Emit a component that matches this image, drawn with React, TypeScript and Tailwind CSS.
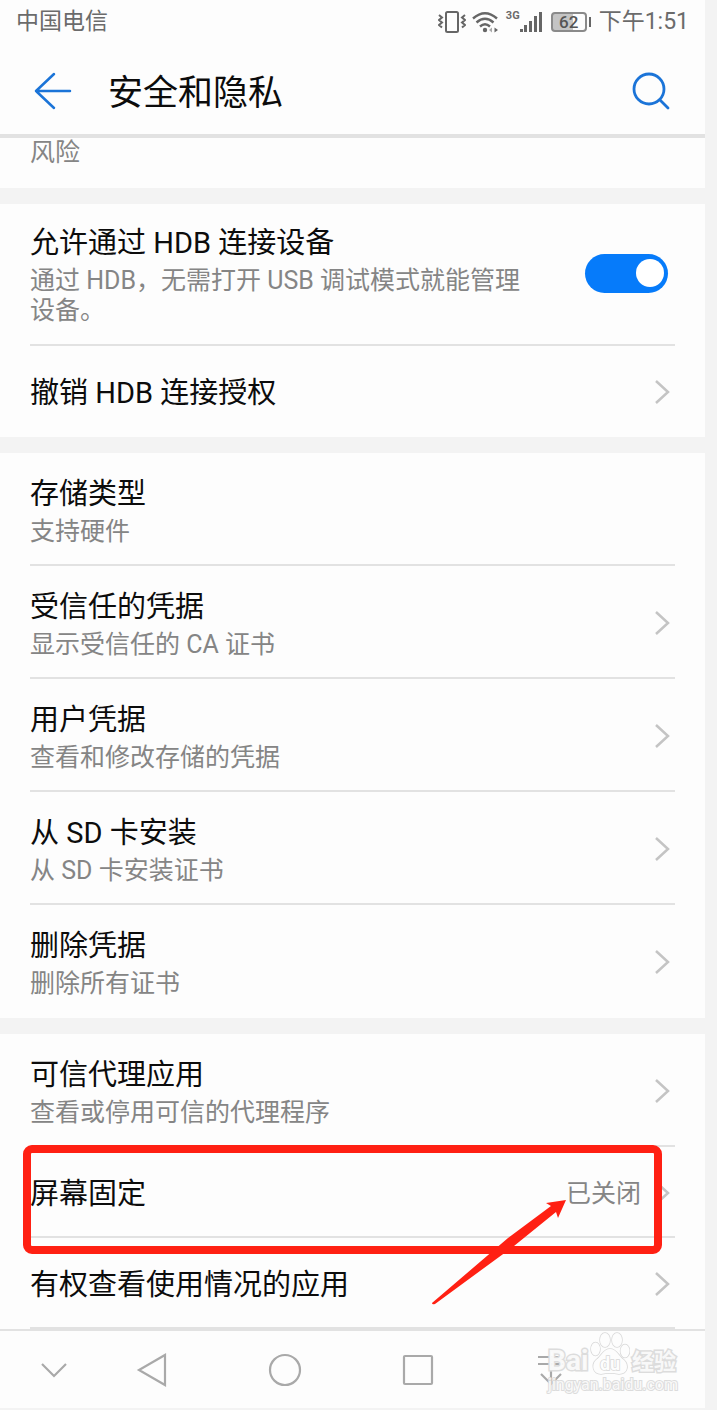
import { useState } from "react";
import type { ReactNode } from "react";

type Item = {
  title: string;
  summary?: string;
  value?: string;
  plain?: boolean;
  highlight?: boolean;
};

const credentialItems: Item[] = [
  { title: "存储类型", summary: "支持硬件", plain: true },
  { title: "受信任的凭据", summary: "显示受信任的 CA 证书" },
  { title: "用户凭据", summary: "查看和修改存储的凭据" },
  { title: "从 SD 卡安装", summary: "从 SD 卡安装证书" },
  { title: "删除凭据", summary: "删除所有证书" },
];

const advancedItems: Item[] = [
  { title: "可信代理应用", summary: "查看或停用可信的代理程序" },
  { title: "屏幕固定", value: "已关闭", highlight: true },
  { title: "有权查看使用情况的应用" },
];

function StatusBar() {
  return (
    <div className="flex h-[42px] items-center pl-4 pr-4 pt-[2px] text-[23px] leading-[30px] text-[#6b6b6b]">
      <span className="flex-1">中国电信</span>

      {/* vibrate */}
      <svg className="mr-[6px]" width="28" height="24" viewBox="0 0 28 24" fill="none" stroke="#666" strokeWidth="2">
        <rect x="8" y="2" width="12" height="20" rx="1.5" />
        <path d="M1 5l3 2.500-3 2.500 3 2.500-3 2.500 3 2.500M27 5l-3 2.500 3 2.500-3 2.500 3 2.500-3 2.500" strokeWidth="2" />
      </svg>

      {/* wifi */}
      <svg className="mr-[8px]" width="26" height="24" viewBox="0 0 26 24" fill="none" stroke="#666" strokeWidth="2.4">
        <path d="M1 8.5Q13-2 25 8.5M4.5 12.5Q13 5 21.500 12.500M8 16.500Q13 12 18 16.500" />
        <circle cx="13" cy="20" r="2.200" fill="#666" stroke="none" />
        <path d="M20 17.500l-3 2.500 3 2.500z" fill="#aaa" stroke="none" />
        <path d="M22.500 17.500l3.500 2.500-3.500 2.500z" fill="#666" stroke="none" />
      </svg>

      <span className="mb-3 text-[11px] font-bold leading-3">3G</span>

      {/* signal */}
      <svg className="mr-[9px]" width="22" height="24" viewBox="0 0 22 24" fill="#666">
        <rect x="0" y="19" width="3" height="3" />
        <rect x="4" y="15" width="3" height="7" />
        <rect x="9" y="11" width="3" height="11" />
        <rect x="14" y="6" width="3" height="16" />
        <rect x="19" y="2" width="3" height="20" />
      </svg>

      {/* battery */}
      <span className="flex h-5 w-[36px] items-center justify-center rounded-[4px] border-2 border-[#8a8a8a] bg-linear-to-r from-[#c4c4c4] from-62% to-[#fdfdfd] to-62% text-[17px] font-medium leading-4 text-[#555]">
        62
      </span>
      <span className="ml-[2px] mr-[8px] h-[10px] w-[2px] bg-[#666]" />

      <span>下午1:51</span>
    </div>
  );
}

function Chevron() {
  return (
    <svg className="mr-[5px] shrink-0" width="16" height="26" viewBox="0 0 16 26" fill="none" stroke="#c4c4c4" strokeWidth="2.500">
      <path d="M2 1l12 11L2 23" />
    </svg>
  );
}

function Gap() {
  return <div className="h-4 bg-[#f3f3f3]" />;
}

function RowText({ title, summary }: { title: string; summary?: string }) {
  return (
    <span className="block flex-1">
      <span className="block text-[29px] leading-[38px] text-[#0c0c0c]">{title}</span>
      {summary && <span className="mt-1 block text-[25px] leading-[30px] text-[#858585]">{summary}</span>}
    </span>
  );
}

// hand-drawn marker around a row and an arrow that points to its value
function Highlight() {
  return (
    <>
      <span className="pointer-events-none absolute -top-[2px] -bottom-[18px] -left-[7px] right-[13px] rounded-[9px] border-8 border-[#ff2013]" />
      <svg className="pointer-events-none absolute right-[108px] top-[52px] z-10" width="136" height="106" viewBox="0 0 136 106" fill="#ff2013">
        <path d="M135 1L115 4L120 7L77 39L1 104Q1 106 4 105L83 47L125 13L127 19Z" />
      </svg>
    </>
  );
}

function Row({ item, closed }: { item: Item; closed?: boolean }) {
  const size = item.summary ? "min-h-[113px]" : "min-h-[91px]";
  const line = closed ? "" : "last:border-transparent";
  return (
    <li className={`relative mx-[30px] border-b-2 border-[#e2e2e2] ${line}`}>
      {item.plain ? (
        <div className={`-mb-[2px] flex items-center pt-[2px] ${size}`}>
          <RowText title={item.title} summary={item.summary} />
        </div>
      ) : (
        <a href="#" className={`-mb-[2px] flex items-center pt-[2px] ${size}`}>
          <RowText title={item.title} summary={item.summary} />
          {item.value && <span className="mr-[13px] text-[25px] leading-[30px] text-[#858585]">{item.value}</span>}
          <Chevron />
        </a>
      )}
      {item.highlight && <Highlight />}
    </li>
  );
}

function NavButton({ label, children }: { label: string; children: ReactNode }) {
  return (
    <button type="button" aria-label={label} className="flex h-full items-center justify-center">
      <svg width="36" height="36" viewBox="0 0 36 36" fill="none" stroke="#a9a9a9" strokeWidth="2.200">
        {children}
      </svg>
    </button>
  );
}

function Watermark() {
  return (
    <div className="pointer-events-none absolute right-[27px] top-0 text-[#fdfdfd]/90 [paint-order:stroke_fill] [-webkit-text-stroke:3px_#dcdcdc]">
      <div className="flex h-[46px] items-end">
        <span className="w-[42px] text-[28px] font-bold leading-[32px]">Bai</span>
        <svg width="40" height="46" viewBox="0 0 40 46" fill="#fdfdfd" stroke="#d8d8d8" strokeWidth="1.500">
          <ellipse cx="15" cy="9" rx="5" ry="7" />
          <ellipse cx="27" cy="9" rx="5" ry="7" />
          <ellipse cx="5.500" cy="18" rx="4.500" ry="6.500" />
          <ellipse cx="35" cy="20" rx="4.500" ry="6.500" />
          <path d="M20 18C13 18 12 25 6 29C1 34 3 43 11 43Q20 41 29 43C38 43 39 34 34 29C28 25 27 18 20 18Z" />
          <text x="20" y="39" textAnchor="middle" fontSize="18" fontWeight="700">du</text>
        </svg>
        <span className="ml-[2px] text-[22px] font-bold leading-[30px]">经验</span>
      </div>
      <div className="text-[16px] leading-[16px] [-webkit-text-stroke:2px_#dcdcdc]">jingyan.baidu.com</div>
    </div>
  );
}

export default function App() {
  const [hdbEnabled, setHdbEnabled] = useState(true);

  return (
    <div lang="zh-CN" className="min-h-screen bg-[#f3f3f3] pr-3 font-[Roboto,'Noto_Sans_CJK_SC',sans-serif]">
      <div className="overflow-hidden bg-[#fdfdfd]">
        <StatusBar />

        <header className="flex h-24 items-center border-b-4 border-[#e2e2e2] pl-[34px] pr-[35px] pt-[6px]">
          <button type="button" aria-label="返回">
            <svg width="38" height="38" viewBox="0 0 38 38" fill="none" stroke="#1b74d8" strokeWidth="2.500" strokeLinecap="round" strokeLinejoin="round">
              <path d="M36 19H2M20 2L2 19L20 36" />
            </svg>
          </button>
          <h1 className="ml-[36px] flex-1 pt-[6px] text-[35px] leading-[44px] text-[#0c0c0c]">安全和隐私</h1>
          <button type="button" aria-label="搜索">
            <svg width="38" height="38" viewBox="0 0 38 38" fill="none" stroke="#1b74d8" strokeWidth="2.800" strokeLinecap="round">
              <circle cx="17" cy="17" r="15" />
              <path d="M28 28L36 36" />
            </svg>
          </button>
        </header>

        <p className="px-[30px] pb-5 text-[25px] leading-[30px] text-[#858585]">风险</p>

        <Gap />

        <ul>
          <li className="mx-[30px] border-b-2 border-[#e2e2e2]">
            <label className="flex items-center pb-[18px] pt-5">
              <RowText title="允许通过 HDB 连接设备" summary="通过 HDB，无需打开 USB 调试模式就能管理设备。" />
              <input
                type="checkbox"
                role="switch"
                checked={hdbEnabled}
                onChange={(e) => setHdbEnabled(e.target.checked)}
                className="mb-1 ml-10 mr-[7px] flex h-[39px] w-[83px] shrink-0 appearance-none items-center rounded-full bg-[#c4c4c4] p-1 before:size-7 before:rounded-full before:bg-white checked:justify-end checked:bg-[#067bfa]"
              />
            </label>
          </li>
          <Row item={{ title: "撤销 HDB 连接授权" }} />
        </ul>

        <Gap />

        <ul>
          {credentialItems.map((item) => (
            <Row key={item.title} item={item} />
          ))}
        </ul>

        <Gap />

        <ul>
          {advancedItems.map((item) => (
            <Row key={item.title} item={item} closed />
          ))}
        </ul>

        <nav className="relative grid h-[79px] grid-cols-[62fr_133fr_133fr_133fr_133fr] border-t-2 border-[#e2e2e2] pl-[23px] pr-[88px]">
          <NavButton label="隐藏导航栏">
            <path d="M6 12l12 12 12-12" />
          </NavButton>
          <NavButton label="后退">
            <path d="M31 3v30L5 18z" />
          </NavButton>
          <NavButton label="主屏幕">
            <circle cx="18" cy="18" r="15" />
          </NavButton>
          <NavButton label="最近任务">
            <rect x="4" y="4" width="28" height="28" rx="1" />
          </NavButton>
          <NavButton label="通知栏">
            <path d="M5 5h26M5 12h26M18 12v20M8 22l10 10 10-10" />
          </NavButton>
          <Watermark />
        </nav>
      </div>
    </div>
  );
}
